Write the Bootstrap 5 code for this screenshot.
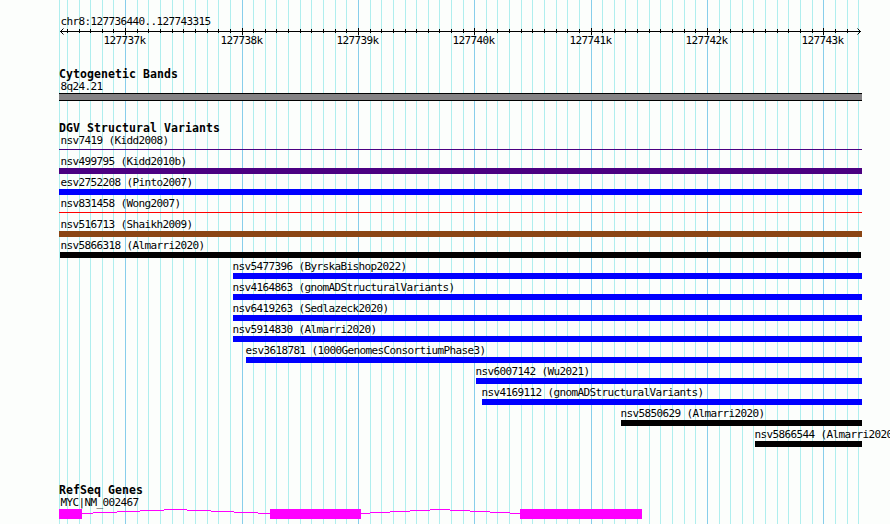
<!DOCTYPE html>
<html lang="en">
<head>
<meta charset="utf-8">
<title>chr8:127736440..127743315</title>
<link href="https://cdn.jsdelivr.net/npm/bootstrap@5.3.0/dist/css/bootstrap.min.css" rel="stylesheet">
<style>
body{background:#fcfefc;color:#000;font-family:"DejaVu Sans Mono","Liberation Mono",monospace;height:524px}
.browser{width:890px;height:524px}
.gridlines{z-index:0}
.tracks{z-index:1;padding-top:15px}
.lbl{font-size:11px;line-height:13px;height:13px;letter-spacing:-.622px;white-space:pre;text-indent:.5px}
.ttl{font-size:11.5px;line-height:13px;height:12px;font-weight:700;letter-spacing:.077px;padding-left:59px;white-space:pre}
.inset{padding-left:60px}
.ruler{height:40px}
.band{height:8px;width:803px;margin-left:59px;background:#848284;border-top:1px solid #000;border-bottom:1px solid #000}
.dgv{margin-top:21px}
.variant{height:21px}
.bar{height:6px}
.hair{height:1px;margin-top:2px}
.c-indigo{background:#4b0082}.c-blue{background:#00f}.c-red{background:#f00}.c-brown{background:#8b4513}.c-black{background:#000}
.genes{margin-top:35px}
svg{display:block}
svg text{font-size:11px;letter-spacing:-.622px}
</style>
<script src="https://cdn.jsdelivr.net/npm/bootstrap@5.3.0/dist/js/bootstrap.bundle.min.js"></script>
</head>
<body class="m-0 overflow-hidden">
<main class="browser position-relative overflow-hidden">
  <svg class="gridlines position-absolute top-0 start-0" width="890" height="524" shape-rendering="crispEdges" aria-hidden="true"><g id="grid"></g></svg>
  <div class="tracks position-relative d-flex flex-column">
    <div class="lbl inset">chr8:127736440..127743315</div>
    <svg class="ruler" width="890" height="40" viewBox="0 28 890 40"><g id="ruler" shape-rendering="crispEdges"></g><g id="ticks"></g>
      <path d="M63.5 28.5L60.5 31.5L63.5 34.5M857.5 28.5L860.5 31.5L857.5 34.5" fill="none" stroke="#000"/></svg>
    <section class="cyto">
      <div class="ttl">Cytogenetic Bands</div>
      <div class="lbl inset">8q24.21</div>
      <div class="band"></div>
    </section>
    <section class="dgv">
      <div class="ttl">DGV Structural Variants</div>
      <div id="variants"></div>
    </section>
    <section class="genes">
      <div class="ttl">RefSeq Genes</div>
      <div class="lbl inset">MYC|NM_002467</div>
      <svg width="890" height="15" viewBox="0 509 890 15" shape-rendering="crispEdges"><g id="gene" fill="#f0f"></g></svg>
    </section>
  </div>
</main>
<script>
const rect=(x,y,w,h,f)=>`<rect x="${x}" y="${y}" width="${w}" height="${h}"${f?` fill="${f}"`:''}/>`;
const put=(id,s)=>document.getElementById(id).innerHTML=s;
const major=[125,242,358,474,591,707,823];
const minor=[59,67,79,90,102,113,137,148,160,172,183,195,207,218,230,253,265,276,288,300,311,323,335,346,370,381,393,405,416,428,439,451,463,486,497,509,521,532,544,556,567,579,602,614,625,637,649,660,672,684,695,719,730,742,753,765,777,788,800,812,835,847,858];
put('grid',minor.map(x=>rect(x,0,1,524,'#afeeee')).join('')+major.map(x=>rect(x,0,1,524,'#87ceeb')).join(''));
put('ruler',rect(60,31,801,1)+minor.slice(1,-1).map(x=>rect(x,29,1,4)).join('')+major.map(x=>rect(x,28,1,7)).join(''));
put('ticks',major.map((x,i)=>`<text x="${x-21.5}" y="44">${127737+i}k</text>`).join(''));

// name, colour, bar start, bar end, thin line
const variants=[
 ['nsv7419 (Kidd2008)','indigo',59,862,1],
 ['nsv499795 (Kidd2010b)','indigo',59,862],
 ['esv2752208 (Pinto2007)','blue',59,862],
 ['nsv831458 (Wong2007)','red',59,862,1],
 ['nsv516713 (Shaikh2009)','brown',59,862],
 ['nsv5866318 (Almarri2020)','black',60,861],
 ['nsv5477396 (ByrskaBishop2022)','blue',233,862],
 ['nsv4164863 (gnomADStructuralVariants)','blue',233,862],
 ['nsv6419263 (Sedlazeck2020)','blue',233,862],
 ['nsv5914830 (Almarri2020)','blue',233,862],
 ['esv3618781 (1000GenomesConsortiumPhase3)','blue',246,862],
 ['nsv6007142 (Wu2021)','blue',476,862],
 ['nsv4169112 (gnomADStructuralVariants)','blue',482,862],
 ['nsv5850629 (Almarri2020)','black',621,862],
 ['nsv5866544 (Almarri2020)','black',755,862]];
put('variants',variants.map(([n,c,a,b,thin])=>`<div class="variant"><div class="lbl" style="padding-left:${Math.max(60,a-1)}px">${n}</div><div class="${thin?'hair':'bar'} c-${c}" style="margin-left:${a}px;width:${b-a}px"></div></div>`).join(''));

// exons, then the stepped intron hats between them
const hats=[[82,93,117,140,164,187,211,234,258,270],[361,370,390,410,430,450,470,490,510,520]];
const level=[513,512,511,510,509,510,511,512,513];
put('gene',rect(59,509,23,10)+rect(270,509,91,10)+rect(520,509,122,10)+hats.map(h=>level.map((y,i)=>rect(h[i],y,h[i+1]-h[i],1)).join('')).join(''));
</script>
</body>
</html>
